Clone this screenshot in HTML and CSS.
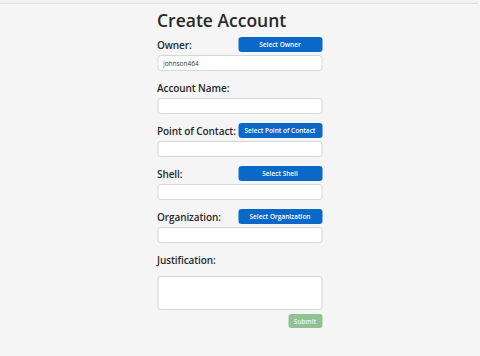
FILE: index.html
```html
<!DOCTYPE html>
<html>
<head>
<meta charset="utf-8">
<link rel="stylesheet" href="styles.css">
</head>
<body>
<div class="topbar"></div>
<main class="form">
  <h1 class="title">Create Account</h1>
  <div class="field">
    <div class="row"><label class="label">Owner:</label><button class="select">Select Owner</button></div>
    <input class="input" type="text" value="johnson464">
  </div>
  <div class="field">
    <div class="row"><label class="label">Account Name:</label></div>
    <input class="input" type="text">
  </div>
  <div class="field">
    <div class="row"><label class="label">Point of Contact:</label><button class="select">Select Point of Contact</button></div>
    <input class="input" type="text">
  </div>
  <div class="field">
    <div class="row"><label class="label">Shell:</label><button class="select">Select Shell</button></div>
    <input class="input" type="text">
  </div>
  <div class="field">
    <div class="row"><label class="label">Organization:</label><button class="select">Select Organization</button></div>
    <input class="input" type="text">
  </div>
  <div class="field">
    <div class="row"><label class="label">Justification:</label></div>
    <textarea class="textarea"></textarea>
  </div>
  <div class="actions"><button class="submit">Submit</button></div>
</main>
</body>
</html>
```
FILE: styles.css
```css
html, body { margin: 0; padding: 0; }
body {
  background: #f5f5f5;
  font-family: "Open Sans", "Noto Sans", sans-serif;
  color: #2a2a2a;
  width: 480px;
  height: 356px;
  overflow: hidden;
}
.topbar {
  height: 3px;
  margin-right: 2px;
  background: #f0f0f0;
  border-bottom: 1px solid #dedede;
}
.form {
  width: 165px;
  margin: 0 auto;
  transform: translateX(-0.5px);
  display: flex;
  flex-direction: column;
}
.title {
  margin: 6px 0 0;
  font-size: 17.5px;
  font-weight: 600;
  line-height: 20px;
  white-space: nowrap;
}
.field {
  display: flex;
  flex-direction: column;
  margin-top: 9px;
}
.field:first-of-type { margin-top: 7px; }
.row {
  display: flex;
  align-items: center;
  justify-content: space-between;
  height: 15px;
  margin-bottom: 3px;
}
.label {
  font-size: 10px;
  font-weight: 600;
  white-space: nowrap;
  letter-spacing: -0.1px;
}
.select {
  width: 84px;
  height: 15px;
  padding: 0;
  border: none;
  border-radius: 3px;
  background: #0a68c8;
  color: #fff;
  font-family: inherit;
  font-size: 6.5px;
  font-weight: 600;
  white-space: nowrap;
  flex: none;
}
.input {
  box-sizing: border-box;
  width: 165px;
  height: 16px;
  margin: 0;
  padding: 0 5px;
  border: 1px solid #d6d6d6;
  border-radius: 3px;
  background: #fff;
  font-family: inherit;
  font-size: 6.5px;
  color: #333;
  outline: none;
}
.textarea {
  box-sizing: border-box;
  width: 165px;
  height: 34px;
  margin: 6px 0 0;
  padding: 2px 5px;
  border: 1px solid #d6d6d6;
  border-radius: 3px;
  background: #fff;
  resize: none;
  display: block;
}
.actions {
  display: flex;
  justify-content: flex-end;
  margin-top: 4px;
}
.submit {
  width: 34px;
  height: 14px;
  padding: 0;
  border: none;
  border-radius: 3px;
  background: #8fc192;
  color: #eef6ee;
  font-family: inherit;
  font-size: 6.5px;
  font-weight: 600;
}
```
